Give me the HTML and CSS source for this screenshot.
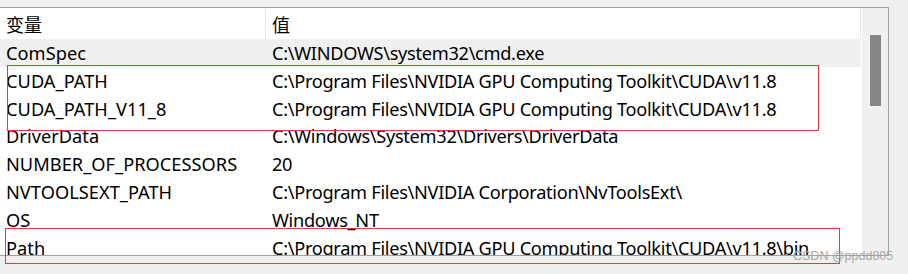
FILE: index.html
```html
<!DOCTYPE html>
<html lang="zh-CN">
<head>
    <meta charset="UTF-8">
    <title>环境变量</title>
    <link rel="stylesheet" href="styles.css">
</head>
<body>

<div class="panel">
    <div class="lista">
        <div class="conteudo">
            <div class="cabecalho">
                <div class="col-nome">变量</div>
                <div class="col-valor">值</div>
            </div>
            <div class="linha selecionada">
                <div class="col-nome">ComSpec</div>
                <div class="col-valor">C:\WINDOWS\system32\cmd.exe</div>
            </div>
            <div class="linha">
                <div class="col-nome">CUDA_PATH</div>
                <div class="col-valor">C:\Program Files\NVIDIA GPU Computing Toolkit\CUDA\v11.8</div>
            </div>
            <div class="linha">
                <div class="col-nome">CUDA_PATH_V11_8</div>
                <div class="col-valor">C:\Program Files\NVIDIA GPU Computing Toolkit\CUDA\v11.8</div>
            </div>
            <div class="linha">
                <div class="col-nome">DriverData</div>
                <div class="col-valor">C:\Windows\System32\Drivers\DriverData</div>
            </div>
            <div class="linha">
                <div class="col-nome">NUMBER_OF_PROCESSORS</div>
                <div class="col-valor">20</div>
            </div>
            <div class="linha">
                <div class="col-nome">NVTOOLSEXT_PATH</div>
                <div class="col-valor">C:\Program Files\NVIDIA Corporation\NvToolsExt\</div>
            </div>
            <div class="linha">
                <div class="col-nome">OS</div>
                <div class="col-valor">Windows_NT</div>
            </div>
            <div class="linha">
                <div class="col-nome">Path</div>
                <div class="col-valor">C:\Program Files\NVIDIA GPU Computing Toolkit\CUDA\v11.8\bin</div>
            </div>
        </div>
        <div class="rolagem">
            <div class="polegar"></div>
        </div>
    </div>

    <!-- marcações em vermelho por cima da lista -->
    <div class="marca marca-cuda"></div>
    <div class="marca marca-path"></div>

    <div class="marca-dagua">CSDN @ppdd805</div>
</div>

</body>
</html>
```

FILE: styles.css
```css
* {
    margin: 0;
    padding: 0;
    box-sizing: border-box;
}

body {
    background: #f0f0f0;
    font-family: "Noto Sans", "Noto Sans CJK SC", sans-serif;
    font-size: 18.2px;
    color: #000;
    width: 908px;
    height: 274px;
    overflow: hidden;
}

.panel {
    position: relative;
    padding-top: 7px;
}

.lista {
    display: flex;
    width: 889px;
    height: 249px;
    border-top: 1px solid #a0a0a0;
    border-right: 1px solid #a0a0a0;
    border-bottom: 1px solid #a0a0a0;
    background: #fff;
    overflow: hidden;
}

.conteudo {
    flex: 1;
    overflow: hidden;
}

.cabecalho {
    display: flex;
    height: 31px;
    align-items: center;
    border-right: 1px solid #e5e5e5;
    font-size: 18px;
}

.cabecalho .col-nome {
    border-right: 1px solid #e5e5e5;
    height: 100%;
    display: flex;
    align-items: center;
}

.linha {
    display: flex;
    height: 27.85px;
    align-items: center;
    white-space: nowrap;
}

.linha.selecionada {
    background: #f0f0f0;
}

.col-nome {
    width: 266px;
    padding-left: 6px;
    letter-spacing: 0.05px;
}

.col-valor {
    padding-left: 6px;
    letter-spacing: -0.3px;
}

.rolagem {
    width: 27px;
    background: #f0f0f0;
    border-left: 1px solid #fff;
    padding-top: 27px;
    padding-left: 8px;
}

.polegar {
    width: 11px;
    height: 71px;
    background: #858585;
}

.marca {
    position: absolute;
    border: 1px solid #e8383d;
}

.marca-cuda {
    left: 7px;
    top: 65px;
    width: 812px;
    height: 66px;
}

.marca-path {
    left: 5px;
    top: 228px;
    width: 835px;
    height: 36px;
}

.marca-dagua {
    position: absolute;
    left: 793px;
    top: 249px;
    font-family: "Liberation Sans", sans-serif;
    font-size: 12.5px;
    color: #a8a8a8;
}
```
